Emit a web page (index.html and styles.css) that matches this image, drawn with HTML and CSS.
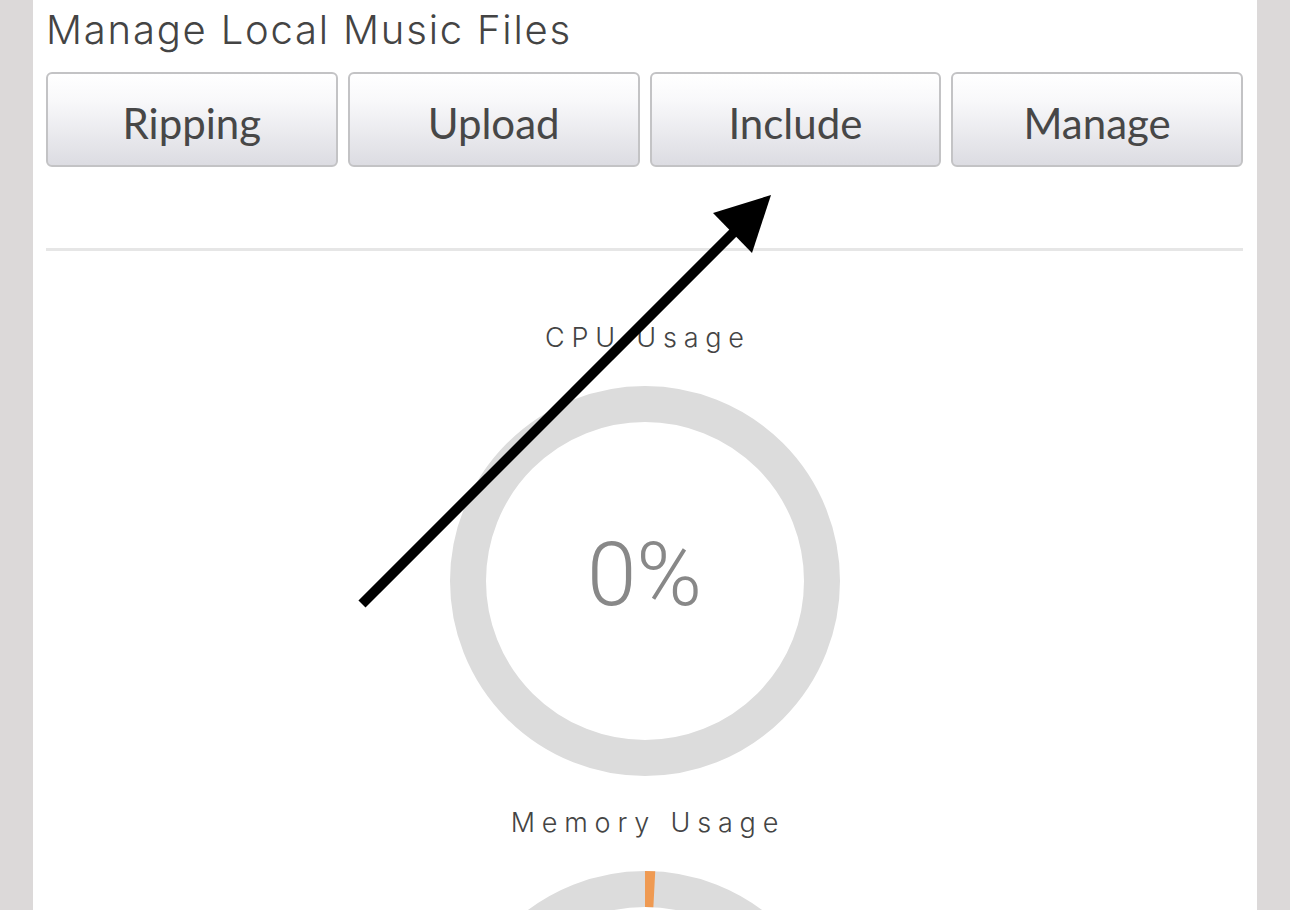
FILE: index.html
```html
<!DOCTYPE html>
<html>
<head>
<meta charset="utf-8">
<link rel="stylesheet" href="styles.css">
</head>
<body>
<div class="panel">
  <h1 class="title">Manage Local Music Files</h1>
  <div class="buttons">
    <button class="btn">Ripping</button>
    <button class="btn">Upload</button>
    <button class="btn">Include</button>
    <button class="btn">Manage</button>
  </div>
  <hr class="divider">
  <div class="stat">
    <div class="stat-label">CPU Usage</div>
    <div class="donut">
      <svg width="390" height="390" viewBox="0 0 390 390">
        <circle cx="195" cy="195" r="177" fill="none" stroke="#dcdcdc" stroke-width="36"/>
      </svg>
      <div class="donut-value">0%</div>
    </div>
  </div>
  <div class="stat stat-mem">
    <div class="stat-label">Memory Usage</div>
    <div class="donut">
      <svg width="390" height="390" viewBox="0 0 390 390">
        <circle cx="195" cy="195" r="177" fill="none" stroke="#dcdcdc" stroke-width="36"/>
        <path d="M195 18 A177 177 0 0 1 204.3 18.24" stroke="#ef9a52" stroke-width="36" fill="none"/>
      </svg>
    </div>
  </div>
  <svg class="arrow" width="1290" height="910" viewBox="0 0 1290 910">
    <line x1="362" y1="604" x2="742" y2="224" stroke="#000" stroke-width="10"/>
    <polygon points="713,213 771,195 752,253" fill="#000"/>
  </svg>
</div>
</body>
</html>
```
FILE: styles.css
```css
html, body {
  margin: 0;
  padding: 0;
  background: #dcd9d9;
  height: 100%;
  overflow: hidden;
}
.panel {
  margin: 0 33px;
  background: #fff;
  padding: 0 14px 0 13px;
  min-height: 100%;
  box-sizing: border-box;
}
.title {
  margin: 0;
  padding-top: 6px;
  font-family: Inter, "Liberation Sans", sans-serif;
  font-weight: 300;
  font-size: 40px;
  line-height: 48px;
  letter-spacing: 1.8px;
  color: #444;
}
.buttons {
  display: grid;
  grid-template-columns: repeat(4, 1fr);
  gap: 10px;
  margin-top: 18px;
}
.btn {
  height: 95px;
  border: 2px solid #c3c3c5;
  border-radius: 6px;
  background: linear-gradient(#ffffff 0%, #f8f8fa 30%, #dcdce2 100%);
  font-family: Lato, "Liberation Sans", sans-serif;
  font-size: 42px;
  color: #474747;
  padding: 6px 0 0;
}
.divider {
  margin: 81px 0 0;
  border: 0;
  border-top: 3px solid #e6e6e6;
}
.stat {
  display: flex;
  flex-direction: column;
  align-items: center;
}
.stat-label {
  font-family: Inter, "Liberation Sans", sans-serif;
  font-weight: 300;
  font-size: 27px;
  line-height: 32px;
  letter-spacing: 6.8px;
  color: #444;
  margin-top: 71px;
  margin-right: -6.8px;
}
.stat-mem .stat-label {
  margin-top: 31px;
}
.donut {
  position: relative;
  width: 390px;
  height: 390px;
  margin-top: 32px;
}
.donut svg {
  display: block;
}
.donut-value {
  position: absolute;
  inset: 0;
  display: flex;
  align-items: center;
  justify-content: center;
  padding-bottom: 14px;
  font-family: Roboto, "Liberation Sans", sans-serif;
  font-weight: 300;
  font-size: 89px;
  color: #888;
}
.arrow {
  position: absolute;
  left: 0;
  top: 0;
  pointer-events: none;
}
```
